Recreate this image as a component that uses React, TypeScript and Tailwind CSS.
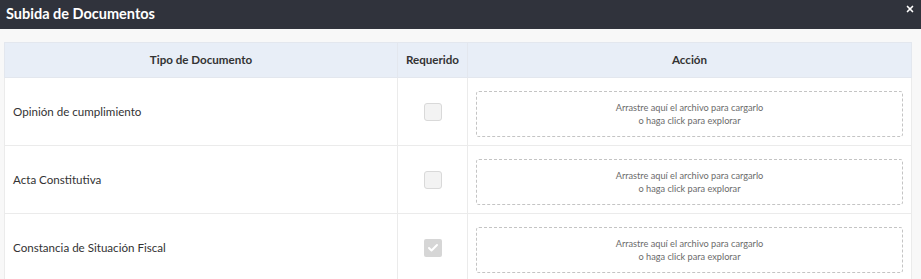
import { Check, X } from "lucide-react";

const docs = [
  { name: "Opinión de cumplimiento", required: false },
  { name: "Acta Constitutiva", required: false },
  { name: "Constancia de Situación Fiscal", required: true },
];

function Dropzone() {
  return (
    <div className="flex h-[46px] flex-col items-center justify-center rounded-[3px] border border-dashed border-[#c4c4c4] text-[9.2px] leading-[13px] text-[#6b6b6b]">
      <span>Arrastre aquí el archivo para cargarlo</span>
      <span>o haga click para explorar</span>
    </div>
  );
}

function Box({ checked }: { checked: boolean }) {
  if (checked) {
    return (
      <div className="mx-auto flex h-[18px] w-[18px] items-center justify-center rounded-[2px] bg-[#d6d6d6]">
        <Check className="h-3 w-3 text-white" strokeWidth={4} />
      </div>
    );
  }
  return <div className="mx-auto h-[18px] w-[18px] rounded-[3px] border border-[#d9d9d9] bg-[#f3f3f3]" />;
}

export default function App() {
  return (
    <div className="h-[279px] w-[921px] overflow-hidden bg-[#f8f8f8] font-['Lato',sans-serif]">
      <div className="flex h-[29px] items-center justify-between bg-[#30333c] pl-[6px] pr-[6px]">
        <h1 className="text-[14.5px] font-bold leading-none text-white">Subida de Documentos</h1>
        <X className="h-[10px] w-[10px] -translate-y-[6px] text-white" strokeWidth={4} />
      </div>

      <div className="pl-[4px] pr-[9px] pt-[13px]">
        <table className="w-full border-collapse border border-[#e6e6e6] bg-white text-[11.6px] text-[#333]">
          <thead>
            <tr className="h-[35px] bg-[#e8eef7]">
              <th className="w-[393px] border border-[#e3e7ee] font-bold">Tipo de Documento</th>
              <th className="w-[70px] border border-[#e3e7ee] font-bold">Requerido</th>
              <th className="border border-[#e3e7ee] font-bold">Acción</th>
            </tr>
          </thead>
          <tbody>
            {docs.map((d) => (
              <tr key={d.name} className="h-[68px]">
                <td className="border border-[#ebebeb] pl-[8px] text-left">{d.name}</td>
                <td className="border border-[#ebebeb]">
                  <Box checked={d.required} />
                </td>
                <td className="border border-[#ebebeb] px-[8px] pb-[8px] pt-[12px]">
                  <Dropzone />
                </td>
              </tr>
            ))}
          </tbody>
        </table>
      </div>
    </div>
  );
}
